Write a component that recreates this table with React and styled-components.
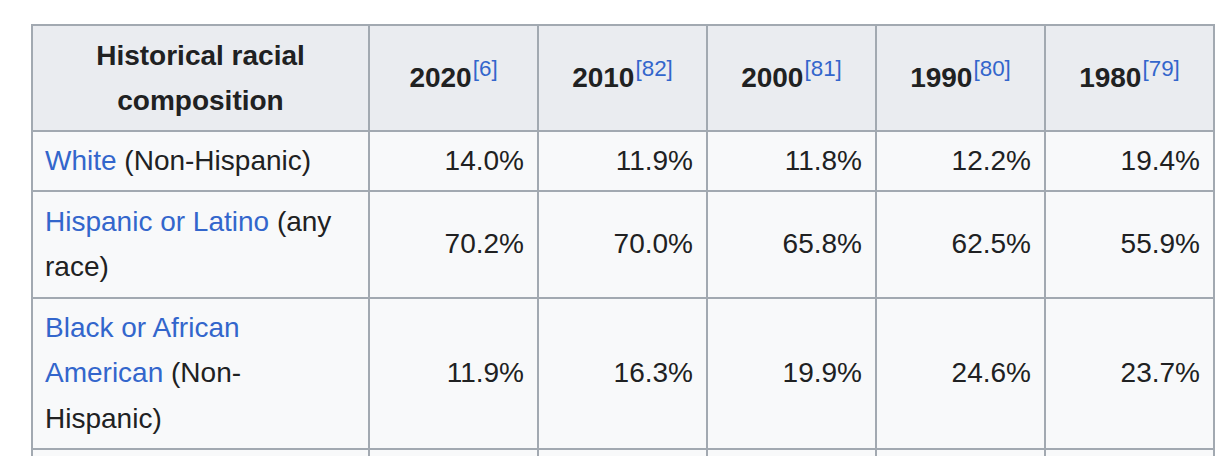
import styled, { createGlobalStyle } from "styled-components";

const GlobalStyle = createGlobalStyle`
  html, body {
    margin: 0;
    padding: 0;
    background: #ffffff;
  }
  body {
    font-family: "Liberation Sans", Arial, sans-serif;
    color: #202122;
  }
`;

const rows = [
  {
    label: (
      <>
        <Link>White</Link> (Non-Hispanic)
      </>
    ),
    values: ["14.0%", "11.9%", "11.8%", "12.2%", "19.4%"],
    height: 58,
  },
  {
    label: (
      <>
        <Link>Hispanic or Latino</Link> (any race)
      </>
    ),
    values: ["70.2%", "70.0%", "65.8%", "62.5%", "55.9%"],
    height: 107,
  },
  {
    label: (
      <>
        <Link>Black or African American</Link> (Non-Hispanic)
      </>
    ),
    values: ["11.9%", "16.3%", "19.9%", "24.6%", "23.7%"],
    height: 151,
  },
  {
    label: (
      <>
        <Link>Asian</Link> (Non-Hispanic)
      </>
    ),
    values: ["1.2%", "1.0%", "1.0%", "0.8%", "0.6%"],
    height: 58,
  },
];

const years = [
  ["2020", "6"],
  ["2010", "82"],
  ["2000", "81"],
  ["1990", "80"],
  ["1980", "79"],
];

function Link({ children }) {
  return <LinkText href="#">{children}</LinkText>;
}

export default function App() {
  return (
    <Page>
      <GlobalStyle />
      <Table>
        <colgroup>
          <col style={{ width: 337 }} />
          {years.map(([y]) => (
            <col key={y} style={{ width: 169 }} />
          ))}
        </colgroup>
        <thead>
          <Row $height={106}>
            <HeadCell>
              Historical racial
              <br />
              composition
            </HeadCell>
            {years.map(([year, ref]) => (
              <HeadCell key={year}>
                {year}
                <Ref>
                  <LinkText href="#">[{ref}]</LinkText>
                </Ref>
              </HeadCell>
            ))}
          </Row>
        </thead>
        <tbody>
          {rows.map((r, i) => (
            <Row key={i} $height={r.height}>
              <LabelCell>{r.label}</LabelCell>
              {r.values.map((v, j) => (
                <NumCell key={j}>{v}</NumCell>
              ))}
            </Row>
          ))}
        </tbody>
      </Table>
    </Page>
  );
}

const Page = styled.div`
  padding: 24px 0 0 31px;
`;

const Table = styled.table`
  border-collapse: collapse;
  table-layout: fixed;
  width: 1182px;
  background: #f8f9fa;
  border: 2px solid #a2a9b1;
  font-size: 28px;
  line-height: 45.5px;
`;

const Row = styled.tr`
  height: ${(p) => p.$height}px;
`;

const HeadCell = styled.th`
  background: #eaecf0;
  border: 2px solid #a2a9b1;
  padding: 6px 12px;
  font-weight: bold;
  text-align: center;
  vertical-align: middle;
  color: #202122;
`;

const LabelCell = styled.td`
  border: 2px solid #a2a9b1;
  padding: 6px 12px;
  text-align: left;
  vertical-align: middle;
`;

const NumCell = styled.td`
  border: 2px solid #a2a9b1;
  padding: 6px 13px;
  text-align: right;
  vertical-align: middle;
`;

const Ref = styled.sup`
  font-size: 80%;
  font-weight: normal;
  line-height: 1;
  vertical-align: 11px;
  margin-left: 1px;
`;

const LinkText = styled.a`
  color: #3366cc;
  text-decoration: none;
`;
